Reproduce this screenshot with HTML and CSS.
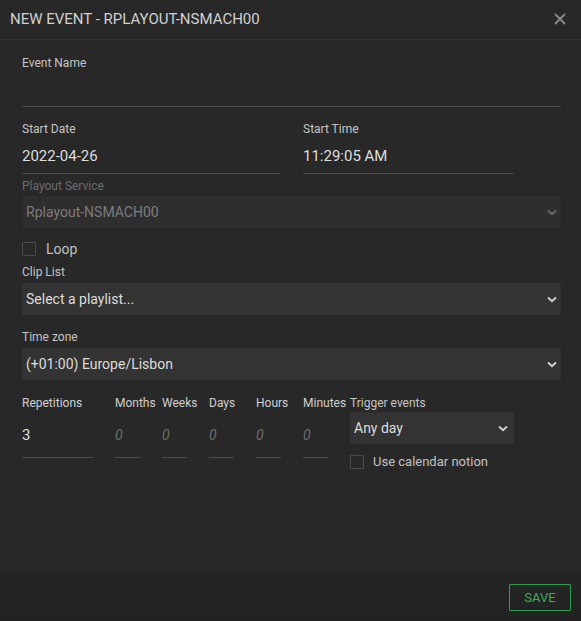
FILE: index.html
```html
<!DOCTYPE html>
<html>
<head>
<meta charset="utf-8">
<link rel="stylesheet" href="styles.css">
</head>
<body>
<div class="modal">
  <div class="header">
    <div class="title">NEW EVENT - RPLAYOUT-NSMACH00</div>
    <svg class="close" width="12" height="12" viewBox="0 0 12 12"><path d="M1 1L11 11M11 1L1 11" stroke="#8a8a8a" stroke-width="1.8" fill="none"/></svg>
  </div>
  <div class="body">
    <div class="field">
      <div class="label">Event Name</div>
      <div class="input full"></div>
    </div>
    <div class="row2">
      <div class="field date">
        <div class="label">Start Date</div>
        <div class="input">2022-04-26</div>
      </div>
      <div class="field time">
        <div class="label">Start Time</div>
        <div class="input">11:29:05 AM</div>
      </div>
    </div>
    <div class="field playout">
      <div class="label disabled">Playout Service</div>
      <div class="select disabled-select"><span>Rplayout-NSMACH00</span><svg class="chev" width="10" height="7" viewBox="0 0 10 7"><path d="M1 1.5L5 5.2L9 1.5" stroke="#6a6a6a" stroke-width="2" fill="none"/></svg></div>
    </div>
    <div class="check loop"><span class="box"></span><span>Loop</span></div>
    <div class="field clip">
      <div class="label">Clip List</div>
      <div class="select"><span>Select a playlist...</span><svg class="chev" width="10" height="7" viewBox="0 0 10 7"><path d="M1 1.5L5 5.2L9 1.5" stroke="#cfcfcf" stroke-width="2" fill="none"/></svg></div>
    </div>
    <div class="field tz">
      <div class="label">Time zone</div>
      <div class="select"><span>(+01:00) Europe/Lisbon</span><svg class="chev" width="10" height="7" viewBox="0 0 10 7"><path d="M1 1.5L5 5.2L9 1.5" stroke="#cfcfcf" stroke-width="2" fill="none"/></svg></div>
    </div>
    <div class="reps">
      <div class="rcol wide">
        <div class="label">Repetitions</div>
        <div class="input num">3</div>
      </div>
      <div class="rcol">
        <div class="label">Months</div>
        <div class="input num ph">0</div>
      </div>
      <div class="rcol">
        <div class="label">Weeks</div>
        <div class="input num ph">0</div>
      </div>
      <div class="rcol">
        <div class="label">Days</div>
        <div class="input num ph">0</div>
      </div>
      <div class="rcol">
        <div class="label">Hours</div>
        <div class="input num ph">0</div>
      </div>
      <div class="rcol">
        <div class="label">Minutes</div>
        <div class="input num ph">0</div>
      </div>
      <div class="trigger">
        <div class="label">Trigger events</div>
        <div class="select small"><span>Any day</span><svg class="chev" width="10" height="7" viewBox="0 0 10 7"><path d="M1 1.5L5 5.2L9 1.5" stroke="#cfcfcf" stroke-width="2" fill="none"/></svg></div>
        <div class="check cal"><span class="box"></span><span>Use calendar notion</span></div>
      </div>
    </div>
  </div>
  <div class="footer">
    <button class="save">SAVE</button>
  </div>
</div>
</body>
</html>
```
FILE: styles.css
```css
* { box-sizing: border-box; }
html, body { margin: 0; padding: 0; }
body {
  background: #282828;
  font-family: Roboto, "Liberation Sans", sans-serif;
  color: #d6d6d6;
}
.modal {
  width: 581px;
  height: 621px;
  display: flex;
  flex-direction: column;
  background: #282828;
}
.header {
  height: 40px;
  flex: 0 0 40px;
  border-bottom: 1px solid #343434;
  display: flex;
  align-items: center;
  justify-content: space-between;
  padding: 0 15px 1px 10px;
}
.title {
  font-size: 15px;
  color: #d0d0d0;
}
.body {
  flex: 1;
  padding: 16px 20px 0 22px;
}
.label {
  font-size: 12px;
  line-height: 14px;
  color: #c4c4c4;
  white-space: nowrap;
}
.label.disabled { color: #6b6b6b; }
.input {
  height: 37px;
  border-bottom: 1px solid #4a4a4a;
  font-size: 15px;
  line-height: 40px;
  color: #dedede;
}
.row2 {
  display: flex;
  gap: 23px;
  margin-top: 15px;
}
.row2 .input { height: 38px; }
.date { width: 258px; }
.time { width: 211px; }
.playout { margin-top: 5px; }
.playout .label { margin-bottom: 3px; }
.select {
  height: 32px;
  background: #333333;
  border-radius: 2px;
  display: flex;
  align-items: center;
  justify-content: space-between;
  padding: 0 4px 0 4px;
  font-size: 14px;
  color: #dcdcdc;
}
.select.disabled-select {
  background: #2e2e2e;
  color: #7c7c7c;
}
.chev { flex: 0 0 auto; margin-top: 1px; }
.check {
  display: flex;
  align-items: center;
  gap: 10px;
  font-size: 14px;
  color: #c8c8c8;
}
.box {
  width: 14px;
  height: 14px;
  border: 1px solid #4a4a4a;
  border-radius: 1px;
}
.loop { margin-top: 14px; height: 14px; color: #c0c0c0; }
.clip { margin-top: 9px; }
.clip .label, .tz .label { margin-bottom: 4px; }
.tz { margin-top: 15px; }
.reps {
  margin-top: 16px;
  display: flex;
  gap: 22px;
}
.rcol { width: 25px; }
.rcol.wide { width: 71px; }
.rcol .label { font-size: 12px; color: #cfcfcf; }
.input.num {
  height: 48px;
  line-height: 51px;
}
.input.num.ph {
  color: #6e6e6e;
  font-style: italic;
  font-size: 14px;
}
.trigger { width: 164px; }
.select.small { margin-top: 2px; padding-left: 4px; padding-right: 6px; }
.cal { margin-top: 10px; gap: 9px; color: #c2c2c2; font-size: 13px; }
.footer {
  flex: 0 0 49px;
  height: 49px;
  background: linear-gradient(#252525, #222222);
  display: flex;
  align-items: flex-start;
  justify-content: flex-end;
  padding: 12px 10px 0 0;
}
.save {
  width: 62px;
  height: 27px;
  background: transparent;
  border: 1px solid #2f9e4c;
  border-radius: 1px;
  color: #39b15a;
  font-family: Roboto, "Liberation Sans", sans-serif;
  font-size: 13px;
  padding: 0;
}
```
